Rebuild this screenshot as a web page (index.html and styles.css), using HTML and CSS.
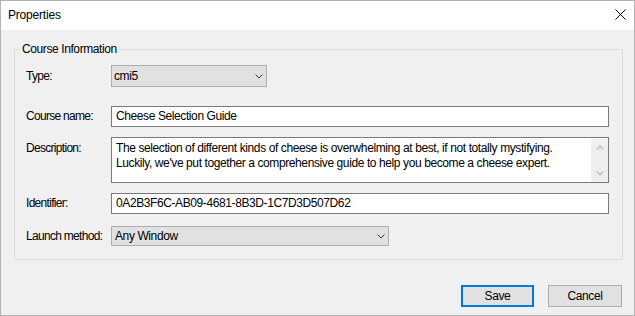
FILE: index.html
```html
<!DOCTYPE html>
<html>
<head>
<meta charset="utf-8">
<link rel="stylesheet" href="styles.css">
</head>
<body>
<div class="window">
  <div class="titlebar">
    <span class="title">Properties</span>
    <svg class="close" viewBox="0 0 11 11"><path d="M0.5 0.5 L10.5 10.5 M10.5 0.5 L0.5 10.5" stroke="#000" stroke-width="1" fill="none"/></svg>
  </div>
  <div class="body">
    <fieldset class="group">
      <legend>Course Information</legend>
      <div class="row r-type">
        <span class="label">Type:</span>
        <div class="select s-type"><span>cmi5</span><svg class="chev" viewBox="0 0 8 5"><polyline points="0.5,0.5 4,4 7.5,0.5" stroke="#3c3c3c" stroke-width="1" fill="none"/></svg></div>
      </div>
      <div class="row r-name">
        <span class="label">Course name:</span>
        <div class="field">Cheese Selection Guide</div>
      </div>
      <div class="row r-desc">
        <span class="label desc-label">Description:</span>
        <div class="textarea">
          <div class="ta-text">The selection of different kinds of cheese is overwhelming at best, if not totally mystifying. Luckily, we've put together a comprehensive guide to help you become a cheese expert.</div>
          <div class="ta-scroll">
            <svg class="sarrow" viewBox="0 0 8 5"><polyline points="0.8,4.5 4,1.2 7.2,4.5" stroke="#c2c2c2" stroke-width="1.6" fill="none"/></svg>
            <svg class="sarrow" viewBox="0 0 8 5"><polyline points="0.8,0.5 4,3.8 7.2,0.5" stroke="#c2c2c2" stroke-width="1.6" fill="none"/></svg>
          </div>
        </div>
      </div>
      <div class="row r-id">
        <span class="label">Identifier:</span>
        <div class="field">0A2B3F6C-AB09-4681-8B3D-1C7D3D507D62</div>
      </div>
      <div class="row r-launch">
        <span class="label">Launch method:</span>
        <div class="select s-launch"><span>Any Window</span><svg class="chev" viewBox="0 0 8 5"><polyline points="0.5,0.5 4,4 7.5,0.5" stroke="#3c3c3c" stroke-width="1" fill="none"/></svg></div>
      </div>
    </fieldset>
    <div class="buttons">
      <button class="btn btn-default">Save</button>
      <button class="btn btn-cancel">Cancel</button>
    </div>
  </div>
</div>
</body>
</html>
```
FILE: styles.css
```css
* { box-sizing: border-box; }
html, body { margin: 0; padding: 0; }
body {
  width: 635px;
  height: 316px;
  overflow: hidden;
  font-family: "Liberation Sans", Arial, sans-serif;
  font-size: 12px;
  letter-spacing: -0.4px;
  color: #000;
  background: #f0f0f0;
}
.window {
  width: 635px;
  height: 316px;
  border: 1px solid #b4b4b4;
  background: #f0f0f0;
  display: flex;
  flex-direction: column;
}
.titlebar {
  height: 29px;
  flex: none;
  background: #fff;
  display: flex;
  align-items: center;
  justify-content: space-between;
  padding: 0 8px 0 7px;
}
.title { line-height: 15px; letter-spacing: -0.2px; }
.close { width: 11px; height: 11px; display: block; margin-top: -2px; }
.body {
  flex: 1;
  padding: 12px 11px 0 13px;
  display: flex;
  flex-direction: column;
}
.group {
  margin: 0;
  padding: 0 0 13px 0;
  border: 1px solid #dcdcdc;
  min-width: 0;
}
.group legend {
  margin-left: 5px;
  padding: 0 2px;
  line-height: 15px;
}
.row {
  display: flex;
  align-items: center;
  padding-left: 11px;
}
.label { width: 85px; flex: none; line-height: 15px; letter-spacing: -0.7px; }
.r-type { margin-top: 8px; height: 22px; }
.r-name { margin-top: 19px; height: 21px; }
.r-desc { margin-top: 10px; height: 46px; align-items: flex-start; }
.r-id { margin-top: 10px; height: 21px; }
.r-launch { margin-top: 12px; height: 20px; }
.desc-label { padding-top: 4px; }
.field {
  width: 498px;
  height: 100%;
  border: 1px solid #7a7a7a;
  background: #fff;
  padding-left: 4px;
  display: flex;
  align-items: center;
  line-height: 15px;
}
.select {
  height: 100%;
  border: 1px solid #adadad;
  background: #e1e1e1;
  display: flex;
  align-items: center;
  justify-content: space-between;
  padding: 0 3px 0 2px;
  line-height: 15px;
}
.s-type { width: 156px; }
.s-launch { width: 278px; padding-left: 3px; }
.chev { width: 8px; height: 5px; display: block; }
.textarea {
  width: 498px;
  height: 46px;
  border: 1px solid #7a7a7a;
  background: #fff;
  display: flex;
}
.ta-text {
  flex: 1;
  padding: 3px 4px;
  line-height: 15px;
}
.ta-scroll {
  width: 17px;
  flex: none;
  margin: 1px 0 0;
  background: #efefef;
  display: flex;
  flex-direction: column;
  justify-content: space-between;
  align-items: center;
  padding: 6px 0;
}
.sarrow { width: 8px; height: 5px; display: block; }
.buttons {
  margin-top: 25px;
  display: flex;
  justify-content: flex-end;
  gap: 14px;
  padding-right: 1px;
}
.btn {
  height: 22px;
  margin: 0;
  font: inherit;
  letter-spacing: inherit;
  color: #000;
  background: #e1e1e1;
  border: 1px solid #adadad;
  padding: 0;
}
.btn-default { width: 73px; border: 2px solid #0078d7; }
.btn-cancel { width: 74px; }
```
